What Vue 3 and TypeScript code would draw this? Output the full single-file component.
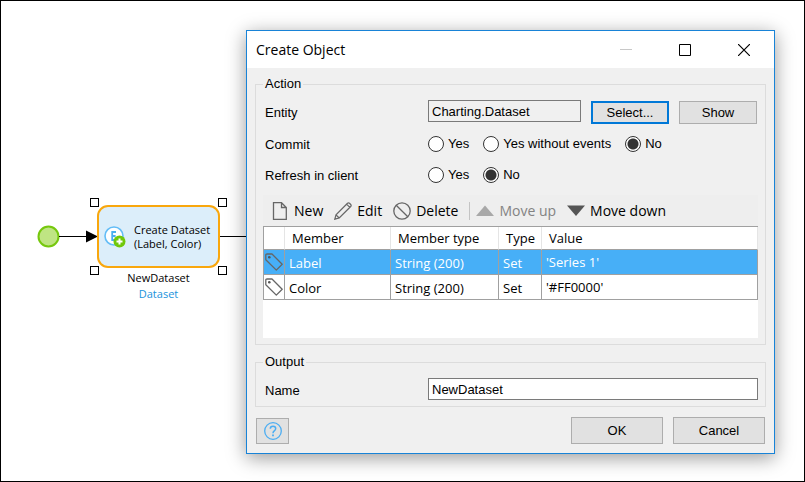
<script setup lang="ts">
import { ref } from 'vue'

interface MemberRow {
  member: string
  memberType: string
  type: string
  value: string
}

const entity = ref('Charting.Dataset')
const commit = ref('No')
const commitOptions = ['Yes', 'Yes without events', 'No']
const refresh = ref('No')
const refreshOptions = ['Yes', 'No']
const outputName = ref('NewDataset')
const selected = ref(0)

const rows: MemberRow[] = [
  { member: 'Label', memberType: 'String (200)', type: 'Set', value: "'Series 1'" },
  { member: 'Color', memberType: 'String (200)', type: 'Set', value: "'#FF0000'" },
]
</script>

<template>
  <main class="canvas">
    <svg class="flow" width="246" height="120" viewBox="0 0 246 120" aria-hidden="true">
      <circle cx="47.5" cy="56.5" r="10" fill="#bfe583" stroke="#76c80e" stroke-width="2" />
      <path d="M58 56.5H88M219 56.5H246" stroke="#000" fill="none" />
      <path d="M85 50.5L97 56.5L85 62.5Z" fill="#000" />
    </svg>
    <div class="activity">
      <svg class="activity-icon" width="22" height="22" viewBox="0 0 22 22" aria-hidden="true">
        <circle cx="10" cy="10" r="9" fill="#fff" stroke="#63bdf7" stroke-width="1.6" />
        <path d="M12 6H8.200V14H12M8.200 10H11.600" fill="none" stroke="#4aaef0" stroke-width="1.800" />
        <circle cx="15.500" cy="15.500" r="6" fill="#70c80b" />
        <path d="M15.500 12.500V18.500M12.500 15.500H18.500" stroke="#fff" stroke-width="2" />
      </svg>
      <span>Create Dataset<br />(Label, Color)</span>
      <i class="handle nw"></i><i class="handle ne"></i><i class="handle sw"></i><i class="handle se"></i>
    </div>
    <div class="caption">
      <span>NewDataset</span>
      <span class="caption-type">Dataset</span>
    </div>

    <section class="dialog" role="dialog" aria-labelledby="dialog-title">
      <header class="titlebar">
        <h1 id="dialog-title">Create Object</h1>
        <button class="win" type="button" aria-label="Minimize" disabled>
          <svg width="12" height="12" viewBox="0 0 12 12"><path d="M0 5.5H12" stroke="#c8c8c8" /></svg>
        </button>
        <button class="win" type="button" aria-label="Maximize">
          <svg width="12" height="12" viewBox="0 0 12 12"><path d="M.5 .5H11.500V11.500H.5Z" fill="none" stroke="#000" /></svg>
        </button>
        <button class="win" type="button" aria-label="Close">
          <svg width="12" height="12" viewBox="0 0 12 12"><path d="M0 0L12 12M12 0L0 12" stroke="#000" stroke-width="1.200" /></svg>
        </button>
      </header>

      <form class="body" @submit.prevent>
        <fieldset>
          <legend>Action</legend>
          <div class="row">
            <label class="name" for="entity">Entity</label>
            <input id="entity" v-model="entity" class="text" type="text" readonly />
            <button class="btn small focused" type="button">Select...</button>
            <button class="btn small show" type="button">Show</button>
          </div>
          <div class="choices" role="radiogroup" aria-labelledby="commit-name">
            <span id="commit-name" class="name">Commit</span>
            <label v-for="o in commitOptions" :key="o" class="choice">
              <input v-model="commit" type="radio" name="commit" :value="o" />{{ o }}
            </label>
          </div>
          <div class="choices" role="radiogroup" aria-labelledby="refresh-name">
            <span id="refresh-name" class="name">Refresh in client</span>
            <label v-for="o in refreshOptions" :key="o" class="choice">
              <input v-model="refresh" type="radio" name="refresh" :value="o" />{{ o }}
            </label>
          </div>

          <div class="toolbar">
            <button class="tool" type="button">
              <svg width="18" height="18" viewBox="0 0 18 18"><path d="M2.500 .7H10.500L15.300 5.500V17.300H2.500ZM10.500 .7V5.500H15.300" fill="none" stroke="#666" stroke-width="1.300" /></svg>
              New
            </button>
            <button class="tool" type="button">
              <svg width="18" height="18" viewBox="0 0 18 18"><path d="M.8 17.200L2 12.800L13.500 1.300Q14.500 .4 15.500 1.300L16.700 2.500Q17.600 3.500 16.700 4.500L5.200 16ZM2 12.800L5.200 16M12.600 2.200L15.800 5.400" fill="none" stroke="#666" stroke-width="1.200" /></svg>
              Edit
            </button>
            <button class="tool" type="button">
              <svg width="18" height="18" viewBox="0 0 18 18"><circle cx="9" cy="9" r="8.200" fill="none" stroke="#666" stroke-width="1.300" /><path d="M3.200 3.200L14.800 14.800" stroke="#666" stroke-width="1.300" /></svg>
              Delete
            </button>
            <span class="divider"></span>
            <button class="tool" type="button" disabled>
              <svg width="18" height="18" viewBox="0 0 18 18"><path d="M9 3.500L18 14H0Z" fill="#a8a8a8" /></svg>
              Move up
            </button>
            <button class="tool" type="button">
              <svg width="18" height="18" viewBox="0 0 18 18"><path d="M0 3.500H18L9 14Z" fill="#555" /></svg>
              Move down
            </button>
          </div>

          <div class="grid">
            <table>
              <colgroup>
                <col class="c-icon" /><col class="c-member" /><col class="c-mtype" /><col class="c-type" /><col />
              </colgroup>
              <thead>
                <tr><th></th><th>Member</th><th>Member type</th><th>Type</th><th>Value</th></tr>
              </thead>
              <tbody>
                <tr v-for="(r, i) in rows" :key="r.member" :class="{ selected: i === selected }" @click="selected = i">
                  <td class="icon">
                    <svg width="18" height="18" viewBox="0 0 18 18"><path d="M.8 2.200Q.8 1 2 1H7L17.200 11.200L11.300 17.100L.8 6.800Z" fill="none" stroke="#666" stroke-width="1.300" stroke-linejoin="round" /><circle cx="4.300" cy="4.300" r="1.300" fill="#555" /></svg>
                  </td>
                  <td>{{ r.member }}</td>
                  <td>{{ r.memberType }}</td>
                  <td>{{ r.type }}</td>
                  <td class="value">{{ r.value }}</td>
                </tr>
              </tbody>
            </table>
          </div>
        </fieldset>

        <fieldset>
          <legend>Output</legend>
          <div class="row output">
            <label class="name" for="output-name">Name</label>
            <input id="output-name" v-model="outputName" class="text" type="text" />
          </div>
        </fieldset>

        <footer class="actions">
          <button class="btn help" type="button" aria-label="Help">
            <svg width="18" height="18" viewBox="0 0 18 18"><circle cx="9" cy="9" r="8.300" fill="none" stroke="#4badf2" stroke-width="1.300" /><path d="M6.300 6.700Q6.300 4.200 9 4.200T11.700 6.600Q11.700 7.900 10.300 8.900Q9 9.800 9 11.300" fill="none" stroke="#4badf2" stroke-width="1.500" /><path d="M9 12.500V14.300" stroke="#4badf2" stroke-width="1.800" /></svg>
          </button>
          <button class="btn big" type="submit">OK</button>
          <button class="btn big" type="button">Cancel</button>
        </footer>
      </form>
    </section>
  </main>
</template>

<style>
body {
  background: #fff;
}
</style>

<style scoped>
* {
  box-sizing: border-box;
}
.canvas {
  position: relative;
  min-height: 100vh;
  border: 1px solid #000;
  overflow: hidden;
  font: 13px/16px "Liberation Sans", Arial, sans-serif;
  color: #000;
}
button,
input {
  font: inherit;
  color: inherit;
  margin: 0;
}
svg {
  display: block;
  flex: none;
}
.flow {
  position: absolute;
  left: 0;
  top: 179px;
}
.activity {
  position: absolute;
  left: 96px;
  top: 204px;
  width: 123px;
  height: 63px;
  display: flex;
  align-items: center;
  gap: 8px;
  padding-left: 5px;
  border: 2px solid #f9a70d;
  border-radius: 11px;
  background: #dceefa;
  font: 11px/14px "Open Sans", sans-serif;
  white-space: nowrap;
}
.handle {
  position: absolute;
  width: 9px;
  height: 9px;
  border: 1px solid #000;
  background: #fff;
}
.nw { left: -9px; top: -9px; }
.ne { right: -9px; top: -9px; }
.sw { left: -9px; bottom: -9px; }
.se { right: -9px; bottom: -9px; }
.caption {
  position: absolute;
  left: 96px;
  top: 269px;
  width: 123px;
  display: flex;
  flex-direction: column;
  align-items: center;
  font: 11px/16px "Open Sans", sans-serif;
}
.caption-type {
  color: #1a93dc;
}
.dialog {
  position: absolute;
  left: 245px;
  right: 29px;
  top: 29px;
  border: 1px solid #1883d7;
  background: #f0f0f0;
  box-shadow: 0 4px 18px rgba(0, 0, 0, 0.4);
}
.titlebar {
  display: flex;
  height: 37px;
  padding: 0 1px 0 9px;
  background: #fff;
}
h1 {
  flex: 1;
  margin: 0;
  font: 14px/37px "Open Sans", sans-serif;
}
.win {
  width: 59px;
  display: flex;
  align-items: center;
  justify-content: center;
  padding: 0;
  border: 0;
  background: none;
}
.body {
  padding: 8px 8px 9px;
}
fieldset {
  min-width: 0;
  margin: 0 0 9px;
  padding: 0 7px 6px;
  border: 1px solid #dcdcdc;
}
legend {
  padding: 0 2px;
  line-height: 16px;
}
.row {
  display: flex;
  align-items: flex-start;
  height: 24px;
  margin-top: 8px;
}
.row.output {
  height: 22px;
}
.name {
  flex: none;
  width: 165px;
  padding-left: 2px;
  line-height: 18px;
}
.row .name {
  line-height: 26px;
}
.text {
  flex: 1;
  min-width: 0;
  height: 22px;
  padding: 0 3px;
  border: 1px solid #7a7a7a;
  background: #fff;
}
.text[readonly] {
  background: #f0f0f0;
}
.btn {
  padding: 0;
  border: 1px solid #adadad;
  border-radius: 0;
  background: #e1e1e1;
}
.small {
  align-self: flex-end;
  width: 78px;
  height: 23px;
  margin-left: 10px;
}
.show {
  margin-right: 1px;
}
.focused {
  border: 2px solid #0078d7;
}
.choices {
  display: flex;
  align-items: flex-start;
  height: 31px;
  padding-top: 8px;
}
.row + .choices {
  margin-top: 4px;
}
.choice {
  display: flex;
  gap: 4px;
  margin-right: 14px;
}
.choice input {
  appearance: none;
  width: 16px;
  height: 16px;
  border: 1px solid #333;
  border-radius: 50%;
  background: #fff;
}
.choice input:checked {
  background: radial-gradient(circle, #333 5px, #fff 6px);
}
.toolbar {
  display: flex;
  align-items: center;
  height: 31px;
  margin-top: 5px;
  padding-left: 8px;
  background: #eee;
}
.tool {
  display: flex;
  align-items: center;
  gap: 5px;
  margin-right: 11px;
  padding: 0;
  border: 0;
  background: none;
  font: 14px/20px "Open Sans", sans-serif;
  white-space: nowrap;
}
.tool:disabled {
  color: #838383;
}
.divider {
  width: 1px;
  height: 18px;
  margin-right: 6px;
  background: #c4c4c4;
}
.grid {
  height: 112px;
  background: #fff;
}
table {
  width: 100%;
  table-layout: fixed;
  border-collapse: separate;
  border-spacing: 0;
  border-left: 1px solid #a0a0a0;
  border-top: 1px solid #a0a0a0;
  font: 13px/18px "Open Sans", sans-serif;
}
.c-icon { width: 21px; }
.c-member { width: 106px; }
.c-mtype { width: 108px; }
.c-type { width: 43px; }
th {
  height: 23px;
  padding: 0 0 0 7px;
  border-right: 1px solid #e5e5e5;
  border-bottom: 1px solid #a0a0a0;
  font-weight: 400;
  text-align: left;
}
td {
  height: 25px;
  padding: 2px 0 0 4px;
  border-right: 1px solid #a0a0a0;
  border-bottom: 1px solid #a0a0a0;
}
td.icon {
  padding: 0 0 0 1px;
}
td.value {
  padding-top: 0;
}
.selected td {
  background: #47aff7;
  color: #fff;
}
.actions {
  display: flex;
  gap: 10px;
  padding: 1px 1px 0;
}
.help {
  display: flex;
  align-items: center;
  justify-content: center;
  width: 33px;
  height: 26px;
  margin: 1px auto 0 0;
}
.big {
  width: 92px;
  height: 27px;
}
</style>
